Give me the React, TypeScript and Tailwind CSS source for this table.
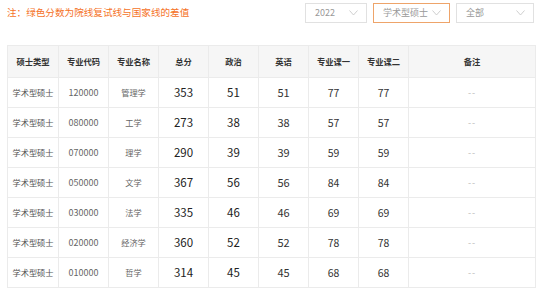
import React from 'react';

interface ScoreRow {
    type: string
    code: string
    name: string
    total: string
    politics: string
    english: string
    course1: string
    course2: string
    note: string
}

const rows: ScoreRow[] = [
    { type: '学术型硕士', code: '120000', name: '管理学', total: '353', politics: '51', english: '51', course1: '77', course2: '77', note: '--' },
    { type: '学术型硕士', code: '080000', name: '工学', total: '273', politics: '38', english: '38', course1: '57', course2: '57', note: '--' },
    { type: '学术型硕士', code: '070000', name: '理学', total: '290', politics: '39', english: '39', course1: '59', course2: '59', note: '--' },
    { type: '学术型硕士', code: '050000', name: '文学', total: '367', politics: '56', english: '56', course1: '84', course2: '84', note: '--' },
    { type: '学术型硕士', code: '030000', name: '法学', total: '335', politics: '46', english: '46', course1: '69', course2: '69', note: '--' },
    { type: '学术型硕士', code: '020000', name: '经济学', total: '360', politics: '52', english: '52', course1: '78', course2: '78', note: '--' },
    { type: '学术型硕士', code: '010000', name: '哲学', total: '314', politics: '45', english: '45', course1: '68', course2: '68', note: '--' },
];

const headers = ['硕士类型', '专业代码', '专业名称', '总分', '政治', '英语', '专业课一', '专业课二', '备注'];
const widths = ['w-[51px]', 'w-[50px]', 'w-[50px]', 'w-[50px]', 'w-[50px]', 'w-[50px]', 'w-[50px]', 'w-[50px]', 'w-[127px]'];

const Chevron: React.FC = () => (
    <svg width="9" height="6" viewBox="0 0 9 6" fill="none">
        <path d="M0.5 0.5 L4.5 5 L8.5 0.5" stroke="#c8c8c8" strokeWidth="0.9" />
    </svg>
);

const SelectBox: React.FC<{ label: string; className: string; active?: boolean }> = ({ label, className, active }) => (
    <div
        className={`h-[20px] flex items-center justify-between pl-[9px] pr-[8px] border text-[9px] text-[#999] ${
            active ? 'border-[#eea46a]' : 'border-[#e1e1e1]'
        } ${className}`}
    >
        <span>{label}</span>
        <Chevron />
    </div>
);

const App: React.FC = () => {
    return (
        <div
            className="w-[541px] h-[292px] bg-white px-[7px] overflow-hidden"
            style={{ fontFamily: '"Noto Sans CJK SC", "Noto Sans", sans-serif' }}
        >
            <div className="flex items-center justify-between h-[24px] pt-[1px]">
                <p className="text-[9.6px] text-[#f5721f] leading-none">注：绿色分数为院线复试线与国家线的差值</p>
                <div className="flex items-center gap-[6px]">
                    <SelectBox label="2022" className="w-[62px]" />
                    <SelectBox label="学术型硕士" className="w-[77px]" active />
                    <SelectBox label="全部" className="w-[78px]" />
                </div>
            </div>

            <table className="mt-[21px] w-[528px] table-fixed border-collapse">
                <colgroup>
                    {widths.map((w, i) => (
                        <col key={i} className={w} />
                    ))}
                </colgroup>
                <thead>
                    <tr className="h-[32px] bg-[#f6f6f6]">
                        {headers.map((h) => (
                            <th key={h} className="border border-[#ebebeb] text-center text-[8.3px] font-bold text-[#333] p-0">
                                {h}
                            </th>
                        ))}
                    </tr>
                </thead>
                <tbody>
                    {rows.map((item) => (
                        <tr key={item.code} className="h-[30px]">
                            <td className="border border-[#ebebeb] text-center text-[8.2px] text-[#555] p-0">{item.type}</td>
                            <td className="border border-[#ebebeb] text-center text-[9px] text-[#666] p-0">{item.code}</td>
                            <td className="border border-[#ebebeb] text-center text-[8.2px] text-[#666] p-0">{item.name}</td>
                            <td className="border border-[#ebebeb] text-center text-[11.5px] text-[#222] p-0">{item.total}</td>
                            <td className="border border-[#ebebeb] text-center text-[11.5px] text-[#222] p-0">{item.politics}</td>
                            <td className="border border-[#ebebeb] text-center text-[11px] text-[#333] p-0">{item.english}</td>
                            <td className="border border-[#ebebeb] text-center text-[10.5px] text-[#333] p-0">{item.course1}</td>
                            <td className="border border-[#ebebeb] text-center text-[10.5px] text-[#333] p-0">{item.course2}</td>
                            <td className="border border-[#ebebeb] text-center text-[9px] tracking-[1px] text-[#bbb] p-0">{item.note}</td>
                        </tr>
                    ))}
                </tbody>
            </table>
        </div>
    );
};

export default App;
